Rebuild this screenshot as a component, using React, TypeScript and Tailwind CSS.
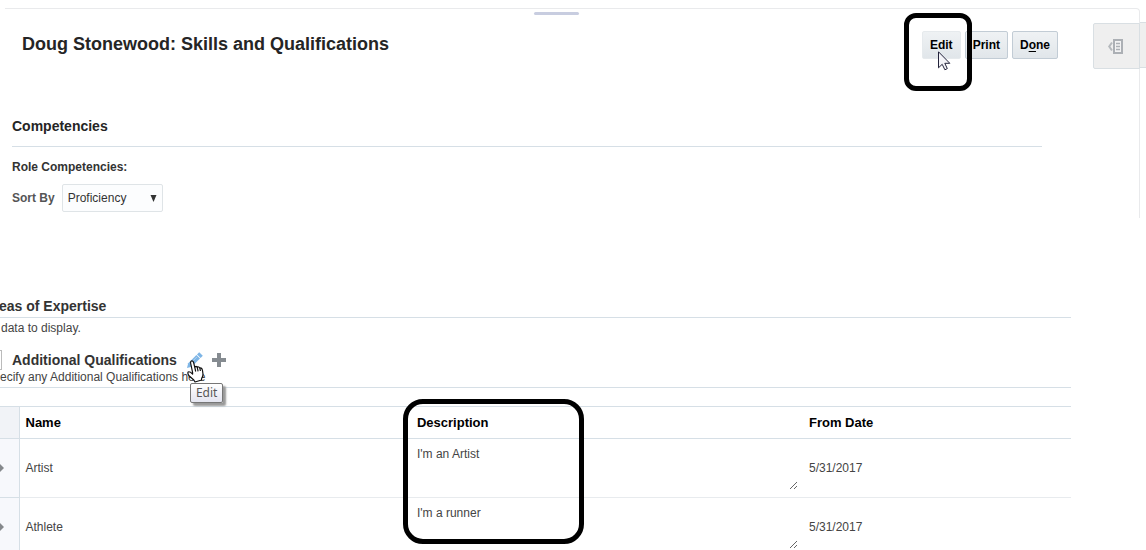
import React from "react";

type Qualification = { name: string; description: string; fromDate: string };

const qualifications: Qualification[] = [
  { name: "Artist", description: "I'm an Artist", fromDate: "5/31/2017" },
  { name: "Athlete", description: "I'm a runner", fromDate: "5/31/2017" },
];

const buttonClass =
  "h-7 rounded-xs border bg-linear-to-b from-[#eff2f4] to-[#e1e6ea] px-[7px] text-xs font-bold text-black";

function ArrowCursor() {
  return (
    <svg className="absolute left-4 top-5" width="13" height="20" viewBox="0 0 13 20" aria-hidden="true">
      <path
        d="M0.5 0.8V16.8L4.2 13.3L6.9 18.8L9.3 17.6L6.8 12.3H11.8Z"
        fill="#f4f4f8"
        stroke="#22223a"
        strokeWidth="1"
      />
    </svg>
  );
}

function HandCursor() {
  return (
    <svg className="absolute left-0 top-2" width="17" height="23" viewBox="0 0 17 23" aria-hidden="true">
      <path
        d="M5.6 12.5L3.6 3Q3.4 1 4.8 .8Q6 .7 6.5 2.2L7.8 7.4Q8 6.3 9 6.3Q10 6.4 10.3 7.6Q10.7 6.8 11.6 7Q12.6 7.2 12.9 8.4Q13.4 7.7 14.2 8.1Q15.2 8.6 15.5 10.5L16 14Q16 16.5 14.6 18.5V20L8 22L6.8 20L2 15.8Q.2 13.2 1.2 12Q2.4 11 5.6 14Z"
        fill="#fff"
        stroke="#111"
        strokeWidth="1.2"
        strokeLinejoin="round"
      />
      <path d="M7.8 7.4L8.7 11.5M10.3 7.6L11.1 11.3M12.9 8.4L13.4 11" stroke="#111" strokeWidth="1.2" />
    </svg>
  );
}

function PencilIcon() {
  return (
    <svg width="16" height="16" viewBox="0 0 16 16" aria-hidden="true">
      <path d="M0 16L1.2 11.2L9.4 3L13 6.6L4.8 14.8Z" fill="#7db5e6" />
      <path d="M10 2.4L12.2 .2L15.8 3.8L13.6 6Z" fill="#7db5e6" />
      <path d="M3 11.8L10 4.8" stroke="#b5d5f1" strokeWidth="1" />
    </svg>
  );
}

function PanelIcon() {
  return (
    <svg width="15" height="15" viewBox="0 0 15 15" aria-hidden="true">
      <path d="M4 3.5L1.2 7.5L4 11.5" fill="none" stroke="#b5b9bd" strokeWidth="2" />
      <rect x="6" y="1" width="8" height="13" fill="#f3f3f4" stroke="#acb0b5" strokeWidth="2" />
      <path d="M8 4.5H12M8 7.5H12M8 10.5H12" stroke="#acb0b5" strokeWidth="1.4" />
    </svg>
  );
}

function SkillsPanel() {
  return (
    <section className="relative mr-[6px] ml-[5px] h-[210px] rounded-tr border-t border-r border-[#e9eaec]">
      <div className="absolute inset-x-0 top-[3px] flex justify-center">
        <span className="mr-8 h-[3px] w-[45px] rounded-full bg-[#c8cde0]" />
      </div>
      <header className="flex items-start justify-between pt-[22px] pr-[81px] pl-[17px]">
        <h1 className="text-lg leading-[26px] font-bold text-[#252525]">Doug Stonewood: Skills and Qualifications</h1>
        <div className="flex gap-1">
          <div className="relative">
            <button className={`${buttonClass} border-[#e6eaed]`}>Edit</button>
            <span className="pointer-events-none absolute -top-[18px] -left-[18px] z-10 h-[78px] w-[68px] rounded-xl border-5 border-black" />
            <ArrowCursor />
          </div>
          <button className={`${buttonClass} border-[#c2ccd5]`}>Print</button>
          <button className={`${buttonClass} border-[#c2ccd5]`}>
            D<u className="underline-offset-2">o</u>ne
          </button>
        </div>
      </header>
      <div className="mr-[97px] ml-[7px] pt-[57px]">
        <h2 className="border-b border-[#d6dfe6] pb-[10px] text-sm leading-5 font-bold text-[#252525]">Competencies</h2>
        <h3 className="pt-3 text-xs leading-4 font-bold text-[#333]">Role Competencies:</h3>
        <div className="mt-[9px] flex items-center gap-[7px]">
          <label htmlFor="sort" className="text-xs font-bold text-[#555]">
            Sort By
          </label>
          <div className="relative">
            <select
              id="sort"
              className="h-7 w-[101px] appearance-none rounded-xs border border-[#dfe4e7] bg-[#fcfdfe] px-[5px] text-xs text-[#333]"
            >
              <option>Proficiency</option>
            </select>
            <svg className="pointer-events-none absolute top-[11px] right-[6px]" width="7" height="7" viewBox="0 0 7 7" aria-hidden="true">
              <path d="M0.5 0H6.5L3.5 7Z" fill="#333" />
            </svg>
          </div>
        </div>
      </div>
      <button
        aria-label="Open side panel"
        className="absolute top-[14px] -right-px flex h-[46px] w-[47px] items-center justify-center rounded-l-xs border border-[#d9dfe3] bg-[#efefef] pr-[2px]"
      >
        <PanelIcon />
      </button>
      <span className="absolute top-[13px] -right-[7px] h-[46px] w-[6px] border-y border-[#d9dfe3] bg-[#efefef]" />
    </section>
  );
}

function QualificationsTable() {
  return (
    <div className="relative mt-[18px]">
      <table className="w-full table-fixed border-collapse text-left text-xs text-[#444]">
        <thead>
          <tr className="h-8 border-y border-[#d6dfe6] text-[13px] text-black">
            <th className="w-[19px] border-r border-[#d6dfe6] bg-[#f1f3f7]" />
            <th className="w-[36.6%] px-[6px] font-bold">Name</th>
            <th className="w-[36.6%] px-[6px] font-bold">Description</th>
            <th className="px-[6px] font-bold">From Date</th>
          </tr>
        </thead>
        <tbody>
          {qualifications.map((q) => (
            <tr key={q.name} className="h-[59px] border-b border-[#e8ebee]">
              <td className="border-r border-b border-[#d6dfe6] bg-[#f7f8fc] p-0">
                <svg width="4" height="8" viewBox="0 0 4 8" aria-hidden="true">
                  <path d="M0 0L4 4L0 8Z" fill="#85888c" />
                </svg>
              </td>
              <td className="px-[6px]">{q.name}</td>
              <td className="p-0">
                <textarea
                  aria-label={`Description of ${q.name}`}
                  defaultValue={q.description}
                  className="block h-11 w-[calc(100%-5px)] resize overflow-hidden px-[6px] text-xs"
                />
              </td>
              <td className="px-[6px]">{q.fromDate}</td>
            </tr>
          ))}
        </tbody>
      </table>
      <span className="pointer-events-none absolute -top-[7px] left-[37.6%] h-[145px] w-[181px] rounded-[20px] border-5 border-black" />
    </div>
  );
}

export default function App() {
  return (
    <main className="h-screen overflow-hidden bg-white pt-2 font-['Liberation_Sans',Arial,sans-serif]">
      <SkillsPanel />
      <section className="mr-[75px] pt-[78px]">
        <h2 className="-ml-px border-b border-[#d6dfe6] text-sm leading-[21px] font-bold text-[#333]">eas of Expertise</h2>
        <p className="pt-[2px] pl-px text-xs leading-4 text-[#444]">data to display.</p>
        <div className="mt-[14px] flex h-5 items-center">
          <span className="h-5 w-[2px] border-y border-r border-[#bbb]" />
          <h2 className="ml-[10px] text-sm leading-5 font-bold text-[#333]">Additional Qualifications</h2>
          <div className="relative ml-[10px] flex">
            <button aria-label="Edit qualifications">
              <PencilIcon />
            </button>
            <HandCursor />
            <span
              role="tooltip"
              className="absolute top-[31px] left-[3px] z-10 rounded-xs border border-[#767676] bg-linear-to-b from-white to-[#e4e5f0] px-[5px] font-['Noto_Sans','Open_Sans',sans-serif] text-xs leading-[18px] text-[#575757] shadow-[3px_3px_2px_#999]"
            >
              Edit
            </span>
          </div>
          <button aria-label="Add qualification" className="ml-[9px]">
            <svg width="14" height="14" viewBox="0 0 14 14" aria-hidden="true">
              <path d="M5 0H9V5H14V9H9V14H5V9H0V5H5Z" fill="#858b90" />
            </svg>
          </button>
        </div>
        <p className="border-b border-[#d6dfe6] pb-[3px] text-xs leading-[14px] text-[#444]">
          ecify any Additional Qualifications here
        </p>
        <QualificationsTable />
      </section>
    </main>
  );
}
